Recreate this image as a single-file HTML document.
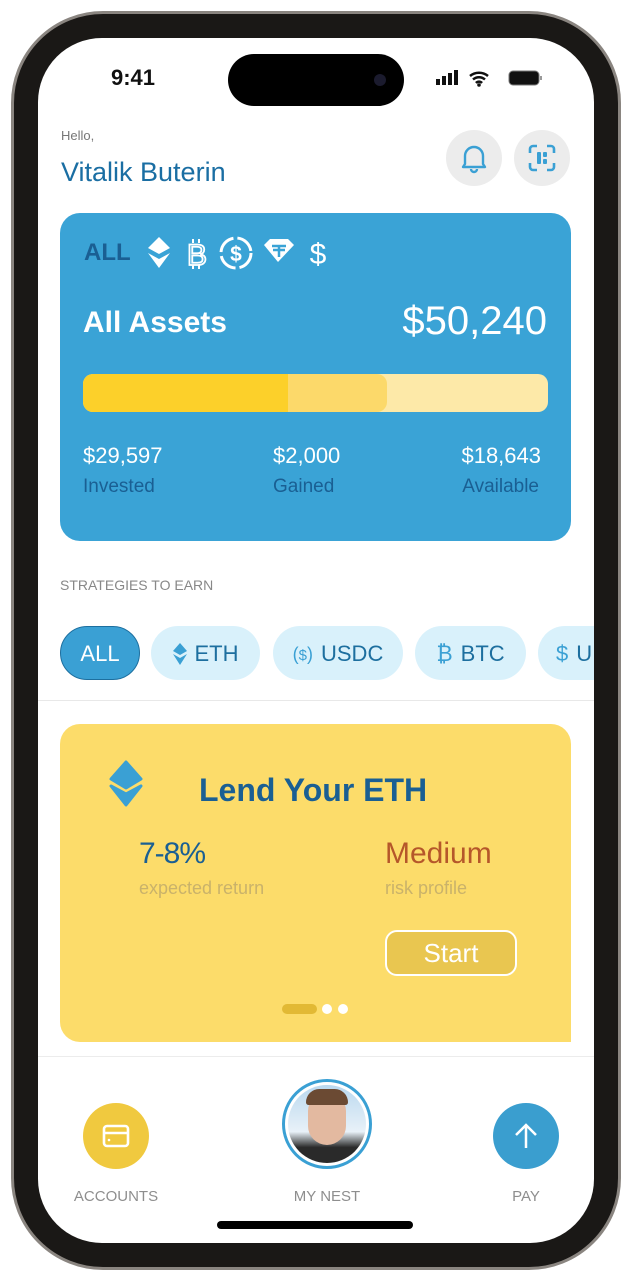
<!DOCTYPE html>
<html><head><meta charset="utf-8"><style>
*{margin:0;padding:0;box-sizing:border-box}
body{width:631px;height:1280px;background:#fff;position:relative;overflow:hidden;font-family:"Liberation Sans",sans-serif}
.frame{position:absolute;left:11px;top:11px;width:610px;height:1259px;border-radius:92px;background:#1a1816;border:3px solid #8a8580}
.screen{position:absolute;left:38px;top:38px;width:556px;height:1205px;border-radius:64px;background:#fff;overflow:hidden}
.abs{position:absolute}
.island{left:190px;top:16px;width:176px;height:52px;border-radius:26px;background:#000}
.chip{position:absolute;top:588px;height:54px;border-radius:27px;background:#d9f1fb;color:#1d6f9f;font-size:22px;display:flex;align-items:center;justify-content:center;gap:8px;padding-top:2px}
.lbl{position:absolute;color:#8e8e8e;font-size:15px;width:120px;text-align:center}
</style></head><body>
<div class="frame"></div>
<div class="screen">
 <div class="abs island"></div>
 <div class="abs" style="left:336px;top:36px;width:12px;height:12px;border-radius:6px;background:#1b1b2e"></div>
 <div class="abs" style="left:73px;top:27px;font-size:22px;font-weight:bold;color:#111">9:41</div>
 <svg class="abs" style="left:398px;top:31px" width="110" height="20">
  <rect x="0" y="10" width="4" height="6" fill="#111"/><rect x="6" y="7" width="4" height="9" fill="#111"/><rect x="12" y="4" width="4" height="12" fill="#111"/><rect x="18" y="1" width="4" height="15" fill="#111"/>
  <path d="M34 7a14 14 0 0 1 18 0M37 10.5a9 9 0 0 1 12 0M40 14a4 4 0 0 1 6 0" stroke="#111" stroke-width="2.5" fill="none"/><circle cx="43" cy="16" r="1.8" fill="#111"/>
  <rect x="73" y="2" width="30" height="14" rx="4" fill="#111" stroke="#777" stroke-width="1"/><rect x="104" y="7" width="2" height="4" fill="#999"/>
 </svg>
 <div class="abs" style="left:23px;top:90px;font-size:13px;color:#777">Hello,</div>
 <div class="abs" style="left:23px;top:119px;font-size:27px;color:#1a6ea3">Vitalik Buterin</div>
 <div class="abs" style="left:408px;top:92px;width:56px;height:56px;border-radius:28px;background:#ececec"></div>
 <svg class="abs" style="left:422px;top:104px" width="28" height="32" viewBox="0 0 28 32"><path d="M5 22V14a9 9 0 0 1 18 0v8l2 3H3z M11 27a3 3 0 0 0 6 0" stroke="#3aa0d4" stroke-width="2.4" fill="none" stroke-linejoin="round"/></svg>
 <div class="abs" style="left:476px;top:92px;width:56px;height:56px;border-radius:28px;background:#ececec"></div>
 <svg class="abs" style="left:490px;top:106px" width="28" height="28" viewBox="0 0 28 28"><path d="M2 9V5a3 3 0 0 1 3-3h4M19 2h4a3 3 0 0 1 3 3v4M26 19v4a3 3 0 0 1-3 3h-4M9 26H5a3 3 0 0 1-3-3v-4" stroke="#3aa0d4" stroke-width="2.6" fill="none"/><rect x="9" y="8" width="4" height="12" rx="1" fill="#3aa0d4"/><rect x="15" y="8" width="4" height="5" rx="1" fill="#3aa0d4"/><rect x="15" y="15" width="4" height="5" rx="1" fill="#3aa0d4"/></svg>

 <div class="abs" style="left:22px;top:175px;width:511px;height:328px;border-radius:20px;background:#3aa3d6"></div>
 <div class="abs" style="left:46px;top:201px;font-size:24px;font-weight:bold;color:#1a5f93">ALL</div>
 <svg class="abs" style="left:108px;top:197px" width="200" height="38" viewBox="0 0 200 38">
  <path d="M13 2l11 11-11 6-11-6z" fill="#fff"/><path d="M2 18l11 6 11-6-11 15z" fill="#fff"/>
  <text x="41" y="30" font-size="30" fill="none" stroke="#fff" stroke-width="1.8" font-family="Liberation Sans">B</text>
  <path d="M47 4v4M53 4v4M47 30v4M53 30v4" stroke="#fff" stroke-width="2"/>
  <circle cx="90" cy="18" r="15" fill="none" stroke="#fff" stroke-width="3" stroke-dasharray="20 4"/>
  <text x="90" y="26" font-size="21" fill="#fff" text-anchor="middle" font-weight="bold" font-family="Liberation Sans">$</text>
  <path d="M118 10l6-6h18l6 6-16 17z" fill="#fff"/><path d="M126 11h14M133 11v11M127 15h12" stroke="#3aa3d6" stroke-width="2.5"/>
  <text x="172" y="29" font-size="30" fill="#fff" text-anchor="middle" font-family="Liberation Sans">$</text>
 </svg>
 <div class="abs" style="left:45px;top:268px;font-size:30px;font-weight:bold;color:#fff">All Assets</div>
 <div class="abs" style="right:47px;top:261px;font-size:40px;color:#fff">$50,240</div>
 <div class="abs" style="left:45px;top:336px;width:465px;height:38px;border-radius:10px;background:#fde9a8;overflow:hidden">
  <div class="abs" style="left:0;top:0;width:304px;height:38px;background:#fcd96a;border-radius:10px"></div>
  <div class="abs" style="left:0;top:0;width:205px;height:38px;background:#fcd02a"></div>
 </div>
 <div class="abs" style="left:45px;top:405px;font-size:22px;color:#fff">$29,597</div>
 <div class="abs" style="left:45px;top:438px;font-size:19px;color:#1a5f93">Invested</div>
 <div class="abs" style="left:235px;top:405px;font-size:22px;color:#fff">$2,000</div>
 <div class="abs" style="left:235px;top:438px;font-size:19px;color:#1a5f93">Gained</div>
 <div class="abs" style="right:53px;top:405px;font-size:22px;color:#fff">$18,643</div>
 <div class="abs" style="right:55px;top:438px;font-size:19px;color:#1a5f93">Available</div>

 <div class="abs" style="left:22px;top:539px;font-size:14px;color:#888">STRATEGIES TO EARN</div>
 <div class="chip" style="left:22px;width:80px;background:#3aa0d4;color:#fff;border:1px solid #1d6f9f">ALL</div>
 <div class="chip" style="left:113px;width:109px"><svg width="14" height="22" viewBox="0 0 14 22"><path d="M7 0l7 8-7 4-7-4z M0 11l7 4 7-4-7 11z" fill="#3aa0d4"/></svg>ETH</div>
 <div class="chip" style="left:235px;width:130px"><span style="color:#3aa0d4;font-size:18px">(<small>$</small>)</span>USDC</div>
 <div class="chip" style="left:377px;width:111px"><span style="color:#3aa0d4">₿</span>BTC</div>
 <div class="chip" style="left:500px;width:100px;justify-content:flex-start;padding-left:18px"><span style="color:#3aa0d4">$</span>U</div>
 <div class="abs" style="left:0;top:662px;width:556px;height:1px;background:#e8e8e8"></div>

 <div class="abs" style="left:22px;top:686px;width:511px;height:318px;border-radius:20px 20px 0 20px;background:#fcdc6a"></div>
 <svg class="abs" style="left:70px;top:722px" width="36" height="48" viewBox="0 0 36 48"><path d="M18 2l15 17-15 9-15-9z" fill="#3aa0d4" stroke="#3aa0d4" stroke-linejoin="round" stroke-width="3"/><path d="M3 26l15 8 15-8-15 19z" fill="#3aa0d4" stroke="#3aa0d4" stroke-linejoin="round" stroke-width="3"/></svg>
 <div class="abs" style="left:161px;top:734px;font-size:32px;font-weight:bold;color:#1a5f93">Lend Your ETH</div>
 <div class="abs" style="left:101px;top:799px;font-size:30px;color:#1a5f93;letter-spacing:-1px">7-8%</div>
 <div class="abs" style="left:101px;top:840px;font-size:18px;color:#c9b26a">expected return</div>
 <div class="abs" style="left:347px;top:799px;font-size:30px;color:#b5572a">Medium</div>
 <div class="abs" style="left:347px;top:840px;font-size:18px;color:#c9b26a">risk profile</div>
 <div class="abs" style="left:347px;top:892px;width:132px;height:46px;border-radius:12px;border:2px solid #fff;background:#e9c650;color:#fff;font-size:26px;text-align:center;line-height:42px">Start</div>
 <div class="abs" style="left:244px;top:966px;width:35px;height:10px;border-radius:5px;background:#e2b934"></div>
 <div class="abs" style="left:284px;top:966px;width:10px;height:10px;border-radius:5px;background:#fff"></div>
 <div class="abs" style="left:300px;top:966px;width:10px;height:10px;border-radius:5px;background:#fff"></div>
 <div class="abs" style="left:0;top:1018px;width:556px;height:1px;background:#ececec"></div>

 <div class="abs" style="left:45px;top:1065px;width:66px;height:66px;border-radius:33px;background:#f0c93f"></div>
 <svg class="abs" style="left:64px;top:1086px" width="28" height="24" viewBox="0 0 28 24"><rect x="2" y="2" width="24" height="20" rx="3" fill="none" stroke="#fff" stroke-width="2.6"/><path d="M2 9h24" stroke="#fff" stroke-width="2.6"/><circle cx="7" cy="16" r="1.3" fill="#fff"/></svg>
 <div class="abs" style="left:244px;top:1041px;width:90px;height:90px;border-radius:45px;border:3px solid #3aa0d4;background:#fff"></div>
 <div class="abs" style="left:250px;top:1047px;width:78px;height:78px;border-radius:39px;background:linear-gradient(180deg,#b9d8ef,#e8f1f8 60%,#2a2a2a 80%);overflow:hidden">
  <div class="abs" style="left:20px;top:8px;width:38px;height:52px;border-radius:19px 19px 20px 20px;background:#e3b9a0"></div>
  <div class="abs" style="left:18px;top:4px;width:42px;height:16px;border-radius:20px 20px 4px 4px;background:#6b4a33"></div>
 </div>
 <div class="abs" style="left:455px;top:1065px;width:66px;height:66px;border-radius:33px;background:#3a9ecf"></div>
 <svg class="abs" style="left:474px;top:1084px" width="28" height="28" viewBox="0 0 28 28"><path d="M14 26V3M4 13L14 3l10 10" stroke="#fff" stroke-width="2.5" fill="none"/></svg>
 <div class="lbl" style="left:18px;top:1150px">ACCOUNTS</div>
 <div class="lbl" style="left:229px;top:1150px">MY NEST</div>
 <div class="lbl" style="left:428px;top:1150px">PAY</div>
 <div class="abs" style="left:179px;top:1183px;width:196px;height:8px;border-radius:4px;background:#000"></div>
</div>
</body></html>
